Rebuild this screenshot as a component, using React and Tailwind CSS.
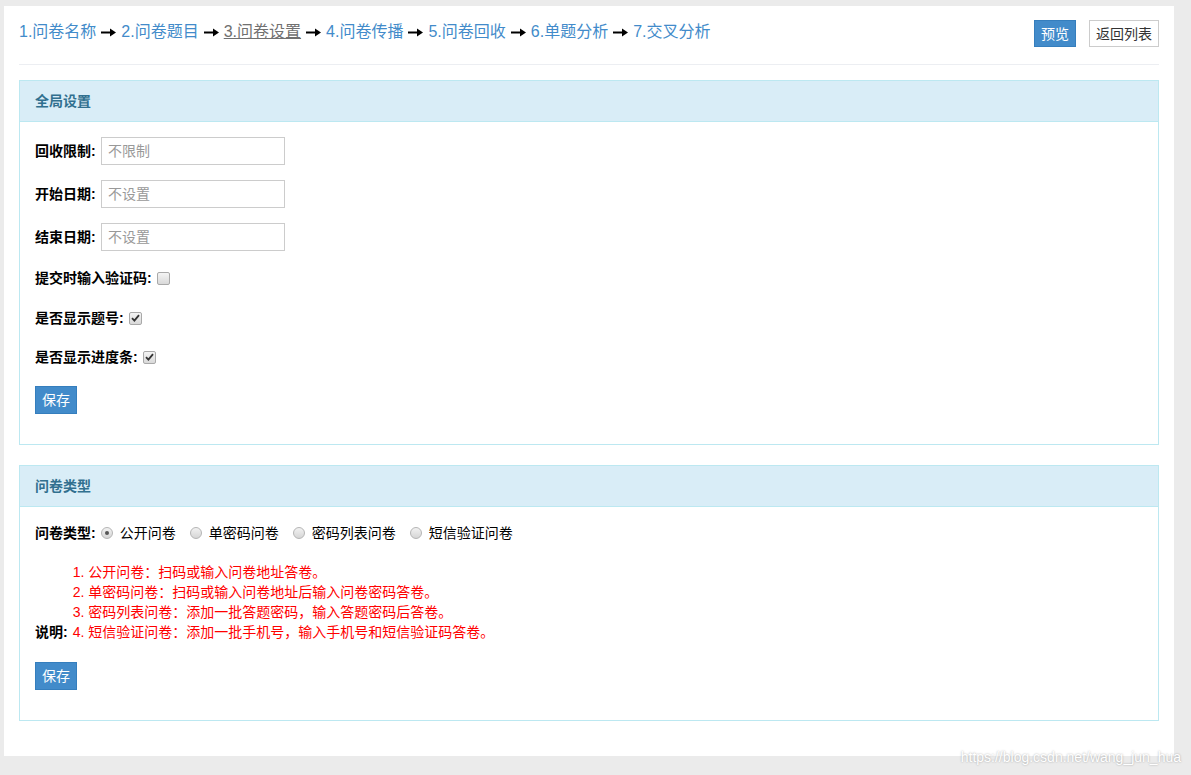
import React from 'react';

const steps = [
  { label: '1.问卷名称' },
  { label: '2.问卷题目' },
  { label: '3.问卷设置', current: true },
  { label: '4.问卷传播' },
  { label: '5.问卷回收' },
  { label: '6.单题分析' },
  { label: '7.交叉分析' },
];

const font = "font-['Liberation_Sans','Noto_Sans_CJK_SC',sans-serif]";

function Arrow() {
  return (
    <svg className="mx-[5px] shrink-0" width="15" height="9" viewBox="0 0 15 9">
      <path d="M0 4.5H11" stroke="#000" strokeWidth="2" />
      <path d="M9 0.5L15 4.5L9 8.5Z" fill="#000" />
    </svg>
  );
}

function Checkbox({ checked }) {
  return (
    <span className="inline-flex items-center justify-center w-[13px] h-[13px] ml-[5px] rounded-[2px] border border-[#a9a9a9] bg-gradient-to-b from-[#f4f4f4] to-[#d9d9d9]">
      {checked && (
        <svg width="9" height="8" viewBox="0 0 9 8">
          <path d="M1 4.2L3.4 6.6L8 1.2" stroke="#333" strokeWidth="1.8" fill="none" />
        </svg>
      )}
    </span>
  );
}

function Radio({ checked }) {
  return (
    <span className="inline-flex items-center justify-center w-[12px] h-[12px] rounded-full border border-[#b5b5b5] bg-gradient-to-b from-[#f2f2f2] to-[#d6d6d6]">
      {checked && <span className="w-[4px] h-[4px] rounded-full bg-[#555]" />}
    </span>
  );
}

function Panel({ title, children }) {
  return (
    <div className="border border-[#bce8f1] bg-white">
      <div className="h-[41px] px-[15px] flex items-center bg-[#d9edf7] border-b border-[#bce8f1] text-[14px] font-bold text-[#31708f]">
        {title}
      </div>
      <div className="px-[15px] pt-[15px] pb-[30px]">{children}</div>
    </div>
  );
}

function SaveButton() {
  return (
    <button className="h-[28px] px-[6px] bg-[#428bca] border border-[#357ebd] text-white text-[14px] leading-none">
      保存
    </button>
  );
}

function InputRow({ label, placeholder }) {
  return (
    <div className="flex items-center h-[28px] mb-[15px]">
      <span className="font-bold text-black w-[66px]">{label}</span>
      <input
        className="w-[184px] h-[28px] border border-[#ccc] px-[6px] text-[14px] placeholder:text-[#999] outline-none"
        placeholder={placeholder}
      />
    </div>
  );
}

export default function App() {
  return (
    <div className={`relative min-h-[775px] bg-[#ebebeb] pt-[6px] pl-[4px] text-[14px] text-[#333] ${font}`}>
      <div className="w-[1170px] h-[750px] bg-white px-[15px]">
        {/* top steps */}
        <div className="flex items-center justify-between h-[59px] border-b border-[#eceef2]">
          <div className="flex items-center text-[16px] leading-[20px] -mt-[6px]">
            {steps.map((s, i) => (
              <React.Fragment key={s.label}>
                {i > 0 && <Arrow />}
                <span className={s.current ? 'text-[#707070] underline' : 'text-[#428bca]'}>{s.label}</span>
              </React.Fragment>
            ))}
          </div>
          <div className="flex items-center gap-[13px] -mt-[3px]">
            <button className="h-[27px] px-[6px] bg-[#428bca] border border-[#357ebd] text-white text-[14px] leading-none">
              预览
            </button>
            <button className="h-[27px] px-[6px] bg-white border border-[#ccc] text-[#333] text-[14px] leading-none">
              返回列表
            </button>
          </div>
        </div>

        <div className="pt-[15px]">
          <Panel title="全局设置">
            <InputRow label="回收限制:" placeholder="不限制" />
            <InputRow label="开始日期:" placeholder="不设置" />
            <InputRow label="结束日期:" placeholder="不设置" />
            <div className="flex items-center h-[24px] mb-[16px]">
              <span className="font-bold text-black">提交时输入验证码:</span>
              <Checkbox />
            </div>
            <div className="flex items-center h-[24px] mb-[15px]">
              <span className="font-bold text-black">是否显示题号:</span>
              <Checkbox checked />
            </div>
            <div className="flex items-center h-[24px] mb-[17px]">
              <span className="font-bold text-black">是否显示进度条:</span>
              <Checkbox checked />
            </div>
            <SaveButton />
          </Panel>

          <div className="mt-[20px]">
            <Panel title="问卷类型">
              <div className="flex items-center h-[22px] text-black">
                <span className="font-bold mr-[5px]">问卷类型:</span>
                <Radio checked />
                <span className="ml-[7px] mr-[14px]">公开问卷</span>
                <Radio />
                <span className="ml-[7px] mr-[14px]">单密码问卷</span>
                <Radio />
                <span className="ml-[7px] mr-[14px]">密码列表问卷</span>
                <Radio />
                <span className="ml-[7px]">短信验证问卷</span>
              </div>
              <div className="flex items-end gap-[5px] mt-[18px] mb-[20px] leading-[20px]">
                <span className="font-bold text-black">说明:</span>
                <div className="text-[#ff0000]">
                  <div>1. 公开问卷：扫码或输入问卷地址答卷。</div>
                  <div>2. 单密码问卷：扫码或输入问卷地址后输入问卷密码答卷。</div>
                  <div>3. 密码列表问卷：添加一批答题密码，输入答题密码后答卷。</div>
                  <div>4. 短信验证问卷：添加一批手机号，输入手机号和短信验证码答卷。</div>
                </div>
              </div>
              <SaveButton />
            </Panel>
          </div>
        </div>
      </div>

      <div className="absolute right-[10px] top-[747px] text-[14px] text-white [text-shadow:0_0_2px_rgba(0,0,0,0.35)] font-['Liberation_Sans',sans-serif]">
        https://blog.csdn.net/wang_jun_hua
      </div>
    </div>
  );
}
